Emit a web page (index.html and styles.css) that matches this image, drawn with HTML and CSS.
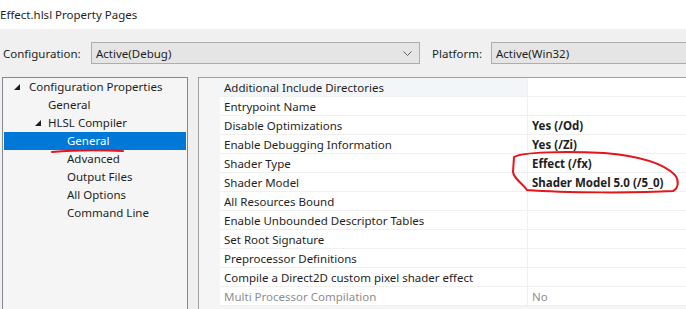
FILE: index.html
```html
<!DOCTYPE html>
<html lang="en">

<head>
    <meta charset="UTF-8">
    <title>Effect.hlsl Property Pages</title>
    <link rel="stylesheet" href="styles.css">
</head>

<body>

    <div class="titlebar">Effect.hlsl Property Pages</div>

    <div class="config-bar">
        <span class="config-label">Configuration:</span>
        <div class="dropdown config-drop">
            <span>Active(Debug)</span>
            <svg class="chevron" width="9" height="5" viewBox="0 0 9 5"><path d="M0.5 0.5 L4.5 4.5 L8.5 0.5" fill="none" stroke="#606060" stroke-width="1"/></svg>
        </div>
        <span class="platform-label">Platform:</span>
        <div class="dropdown platform-drop">
            <span>Active(Win32)</span>
        </div>
    </div>

    <div class="main">
        <div class="tree">
            <div class="node lvl0"><svg class="arrow" width="6" height="6" viewBox="0 0 6 6"><polygon points="6,0 6,6 0,6" fill="#1e1e1e"/></svg>Configuration Properties</div>
            <div class="node lvl1">General</div>
            <div class="node lvl1 has-arrow"><svg class="arrow" width="6" height="6" viewBox="0 0 6 6"><polygon points="6,0 6,6 0,6" fill="#1e1e1e"/></svg>HLSL Compiler</div>
            <div class="node lvl2 selected">General</div>
            <div class="node lvl2">Advanced</div>
            <div class="node lvl2">Output Files</div>
            <div class="node lvl2">All Options</div>
            <div class="node lvl2">Command Line</div>
        </div>

        <div class="grid">
            <div class="row first"><div class="name">Additional Include Directories</div><div class="value"></div></div>
            <div class="row"><div class="name">Entrypoint Name</div><div class="value"></div></div>
            <div class="row"><div class="name">Disable Optimizations</div><div class="value">Yes (/Od)</div></div>
            <div class="row"><div class="name">Enable Debugging Information</div><div class="value">Yes (/Zi)</div></div>
            <div class="row"><div class="name">Shader Type</div><div class="value">Effect (/fx)</div></div>
            <div class="row"><div class="name">Shader Model</div><div class="value">Shader Model 5.0 (/5_0)</div></div>
            <div class="row"><div class="name">All Resources Bound</div><div class="value"></div></div>
            <div class="row"><div class="name">Enable Unbounded Descriptor Tables</div><div class="value"></div></div>
            <div class="row"><div class="name">Set Root Signature</div><div class="value"></div></div>
            <div class="row"><div class="name">Preprocessor Definitions</div><div class="value"></div></div>
            <div class="row"><div class="name">Compile a Direct2D custom pixel shader effect</div><div class="value"></div></div>
            <div class="row disabled"><div class="name">Multi Processor Compilation</div><div class="value">No</div></div>
        </div>
    </div>

    <!-- red pen marks drawn over the screenshot -->
    <svg class="marks" width="686" height="309" viewBox="0 0 686 309">
        <path d="M52 152 C 75 150, 100 150, 123 151" fill="none" stroke="#e8141c" stroke-width="2" stroke-linecap="round"/>
        <path d="M604 153 C 565 151, 522 152, 514 157 L 513 172 C 514 179, 522 183, 527 190 C 565 193, 640 193, 673 191 C 679 188, 679 180, 675 175 C 664 164, 640 156, 604 153" fill="none" stroke="#e8141c" stroke-width="2" stroke-linecap="round"/>
    </svg>

</body>

</html>
```

FILE: styles.css
```css
body {
    margin: 0;
    width: 686px;
    height: 309px;
    overflow: hidden;
    background: #f0f0f0;
    font-family: "Noto Sans", sans-serif;
    font-size: 11.5px;
    color: #1e1e1e;
    position: relative;
}

.titlebar {
    height: 29px;
    line-height: 30px;
    background: white;
    white-space: nowrap;
}

.config-bar {
    display: flex;
    align-items: center;
    height: 22px;
    margin-top: 13px;
    white-space: nowrap;
}

.config-label {
    flex-shrink: 0;
    margin-left: 3px;
    width: 88px;
}

.dropdown {
    box-sizing: border-box;
    height: 22px;
    border: 1px solid #adadad;
    background: #e5e5e5;
    display: flex;
    align-items: center;
    padding-left: 4px;
}

.config-drop {
    flex-shrink: 0;
    width: 329px;
    position: relative;
}

.chevron {
    position: absolute;
    right: 7px;
    top: 8px;
}

.platform-label {
    flex-shrink: 0;
    margin-left: 12px;
    width: 59px;
}

.platform-drop {
    flex: 1;
    border-right: none;
}

.main {
    display: flex;
    margin-top: 13px;
    gap: 10px;
}

.tree {
    flex-shrink: 0;
    margin-left: 2px;
    width: 186px;
    height: 240px;
    box-sizing: border-box;
    border: 1px solid #828790;
    background: #f5f5f5;
    padding: 0 1px;
    white-space: nowrap;
}

.node {
    height: 18px;
    line-height: 18px;
    position: relative;
}

.lvl0 {
    padding-left: 25px;
}

.lvl1 {
    padding-left: 44px;
}

.lvl2 {
    padding-left: 63px;
}

.arrow {
    position: absolute;
    top: 6px;
}

.lvl0 .arrow {
    left: 10px;
}

.has-arrow .arrow {
    left: 31px;
}

.selected {
    background: #0078d7;
    color: white;
}

.grid {
    flex: 1;
    height: 240px;
    box-sizing: border-box;
    border: 1px solid #a0a0a0;
    border-right: none;
    background: #f5f5f5;
    padding-left: 21px;
    white-space: nowrap;
}

.row {
    display: flex;
    height: 19px;
    line-height: 20px;
    box-sizing: border-box;
    border-bottom: 1px solid #f0f0f0;
    background: white;
}

.row.first {
    background: #f3f6f9;
}

.name {
    width: 308px;
    padding-left: 4px;
    box-sizing: border-box;
    border-right: 1px solid #f0f0f0;
}

.value {
    flex: 1;
    padding-left: 4px;
    font-weight: bold;
    background: white;
}

.disabled {
    color: #8d8d8d;
}

.disabled .value {
    font-weight: normal;
}

.marks {
    position: absolute;
    left: 0;
    top: 0;
    pointer-events: none;
}
```
